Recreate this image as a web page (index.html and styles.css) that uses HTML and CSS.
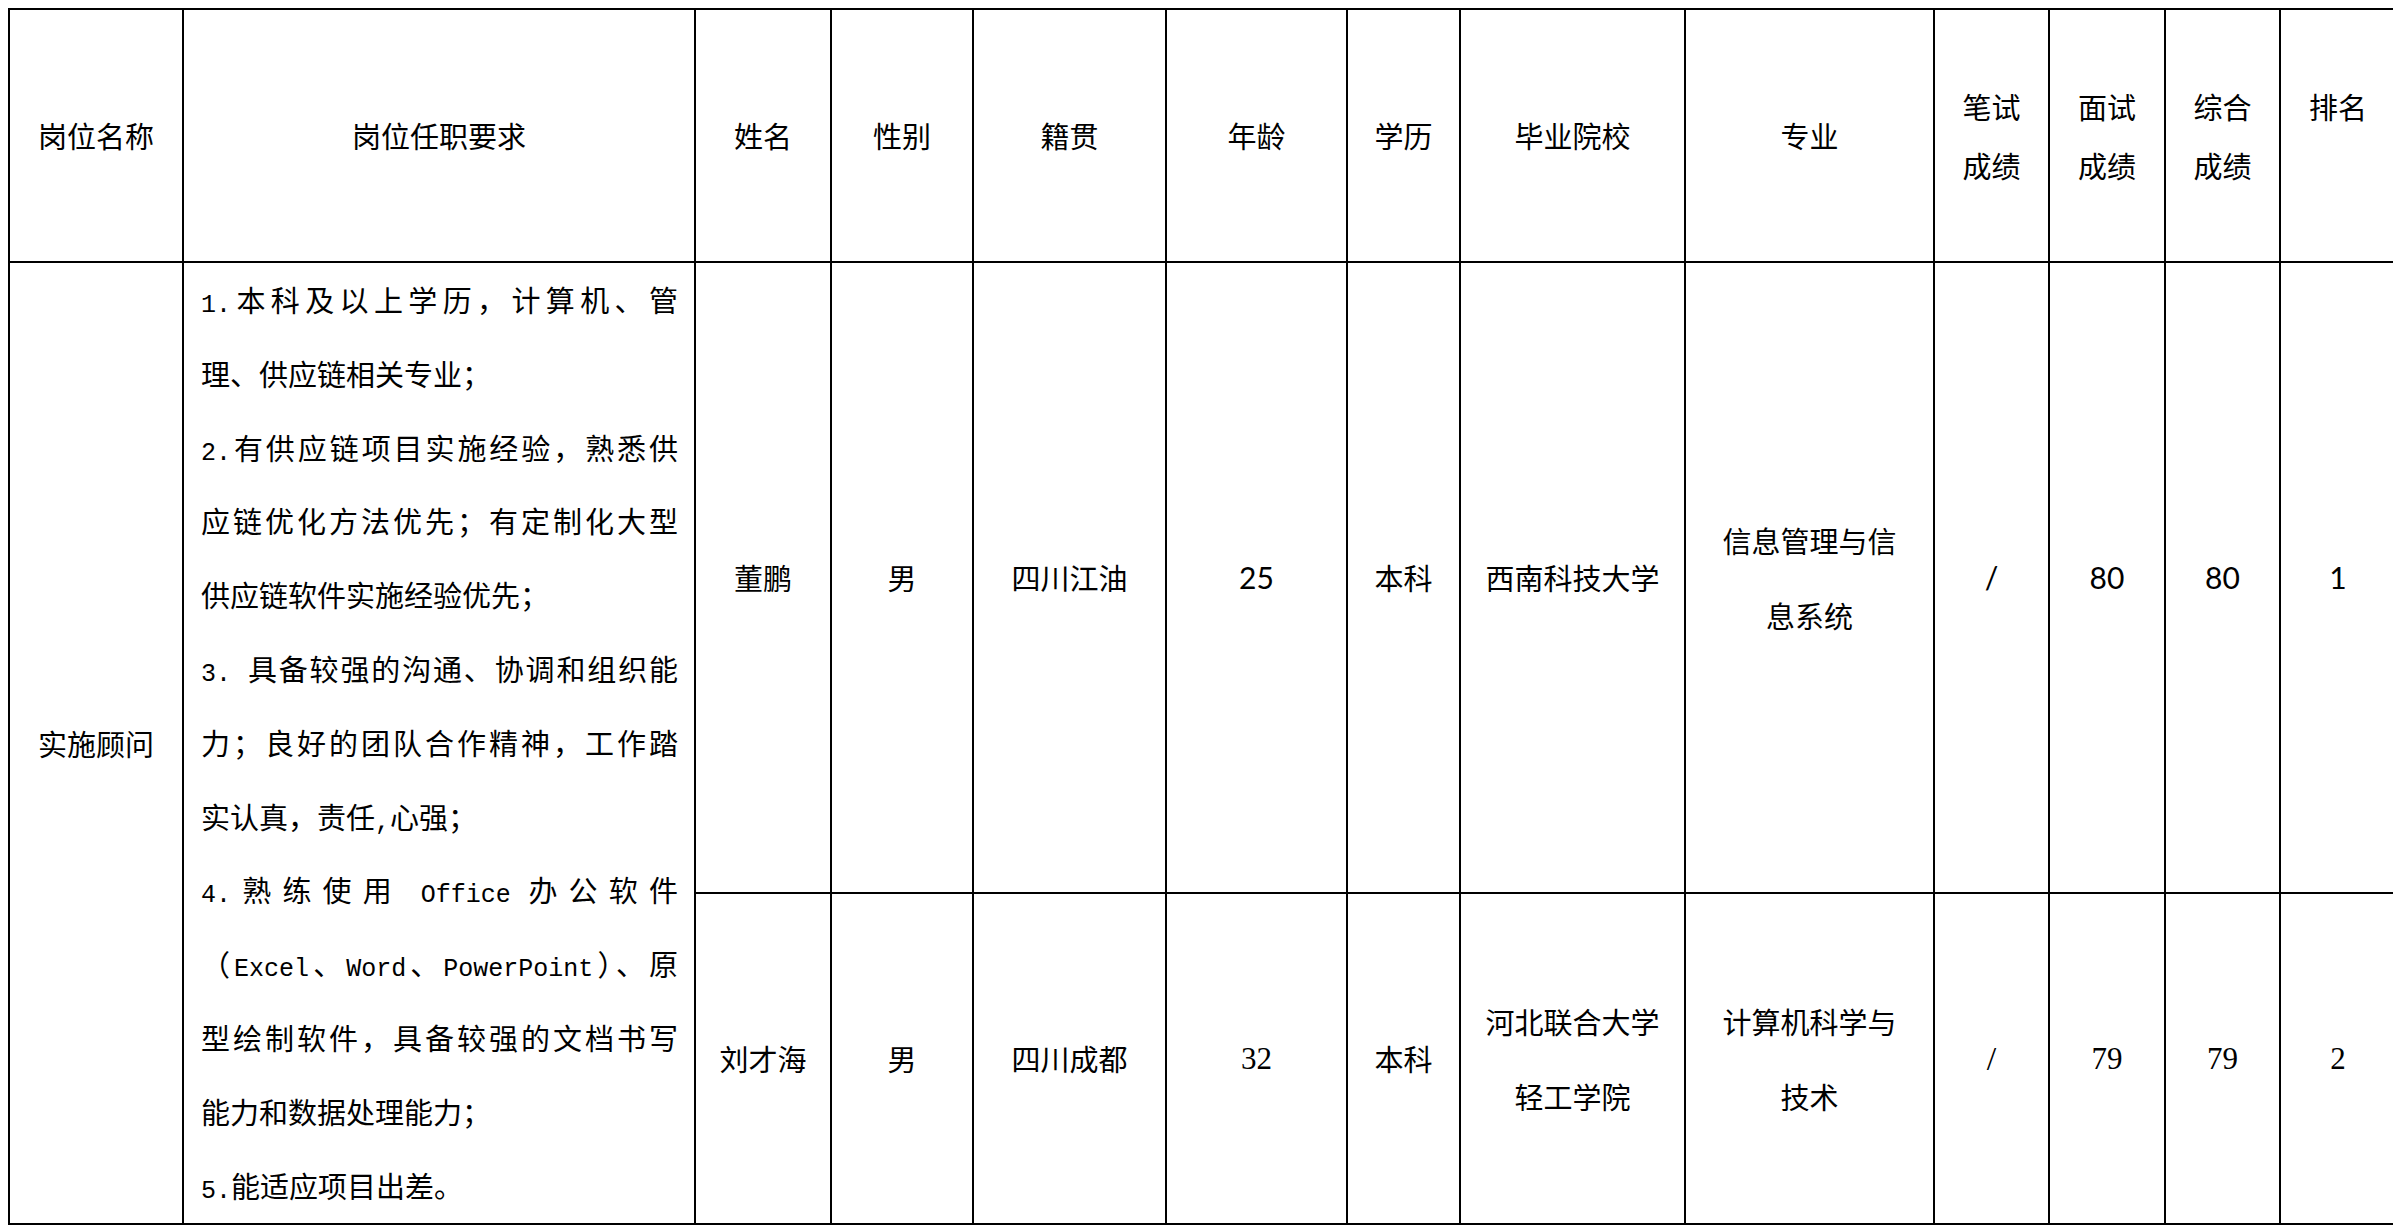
FILE: index.html
```html
<!DOCTYPE html>
<html lang="zh-CN">
<head>
<meta charset="utf-8">
<title>岗位面试成绩</title>
<link rel="stylesheet" href="styles.css">
</head>
<body>
<table class="sheet">
  <colgroup>
    <col class="c-pos"><col class="c-req"><col class="c-name"><col class="c-sex"><col class="c-home">
    <col class="c-age"><col class="c-edu"><col class="c-school"><col class="c-major">
    <col class="c-score"><col class="c-score2"><col class="c-score"><col class="c-rank">
  </colgroup>
  <thead>
    <tr class="hrow">
      <th>岗位名称</th>
      <th>岗位任职要求</th>
      <th>姓名</th>
      <th>性别</th>
      <th>籍贯</th>
      <th>年龄</th>
      <th>学历</th>
      <th>毕业院校</th>
      <th>专业</th>
      <th>笔试<br>成绩</th>
      <th>面试<br>成绩</th>
      <th>综合<br>成绩</th>
      <th class="top">排名</th>
    </tr>
  </thead>
  <tbody>
    <tr class="r1">
      <td rowspan="2" class="pos">实施顾问</td>
      <td rowspan="2" class="req">
        <p class="item">
          <span class="ln j"><span class="lat">1.</span>本科及以上学历，计算机、管</span>
          <span class="ln">理、供应链相关专业；</span>
        </p>
        <p class="item">
          <span class="ln j"><span class="lat">2.</span>有供应链项目实施经验，熟悉供</span>
          <span class="ln j">应链优化方法优先；有定制化大型</span>
          <span class="ln">供应链软件实施经验优先；</span>
        </p>
        <p class="item">
          <span class="ln j"><span class="lat">3. </span>具备较强的沟通、协调和组织能</span>
          <span class="ln j">力；良好的团队合作精神，工作踏</span>
          <span class="ln">实认真，责任<span class="lat">,</span>心强；</span>
        </p>
        <p class="item">
          <span class="ln j"><span class="lat">4.</span>熟练使用 <span class="lat">Office</span> 办公软件</span>
          <span class="ln j">（<span class="lat">Excel</span>、<span class="lat">Word</span>、<span class="lat">PowerPoint</span>）、原</span>
          <span class="ln j">型绘制软件，具备较强的文档书写</span>
          <span class="ln">能力和数据处理能力；</span>
        </p>
        <p class="item">
          <span class="ln"><span class="lat">5.</span>能适应项目出差。</span>
        </p>
      </td>
      <td>董鹏</td>
      <td>男</td>
      <td>四川江油</td>
      <td class="sans-num">25</td>
      <td>本科</td>
      <td>西南科技大学</td>
      <td>信息管理与信<br>息系统</td>
      <td class="sans-num">/</td>
      <td class="sans-num">80</td>
      <td class="sans-num">80</td>
      <td class="sans-num">1</td>
    </tr>
    <tr class="r2">
      <td>刘才海</td>
      <td>男</td>
      <td>四川成都</td>
      <td class="serif-num">32</td>
      <td>本科</td>
      <td>河北联合大学<br>轻工学院</td>
      <td>计算机科学与<br>技术</td>
      <td class="serif-num slash">/</td>
      <td class="serif-num">79</td>
      <td class="serif-num">79</td>
      <td class="serif-num">2</td>
    </tr>
  </tbody>
</table>
</body>
</html>
```

FILE: styles.css
```css
html, body {
  background: #ffffff;
}

body {
  margin: 8px;
}

.sheet {
  border-collapse: separate;
  border-spacing: 2px;
  background: #000000;
  table-layout: fixed;
  width: 2389px;
}

.c-pos { width: 172px; }
.c-req { width: 510px; }
.c-name { width: 134px; }
.c-sex { width: 140px; }
.c-home { width: 191px; }
.c-age { width: 179px; }
.c-edu { width: 111px; }
.c-school { width: 223px; }
.c-major { width: 247px; }
.c-score { width: 113px; }
.c-score2 { width: 114px; }
.c-rank { width: 114px; }

th, td {
  background: #ffffff;
  padding: 0;
  text-align: center;
  vertical-align: middle;
  color: #000000;
  font-family: "Noto Sans CJK SC", "Noto Sans CJK TC", sans-serif;
  font-size: 29px;
  font-weight: 400;
}

.hrow {
  height: 251px;
}

.hrow th {
  line-height: 59px;
}

.hrow th.top {
  vertical-align: top;
  padding-top: 67px;
}

.r1 {
  height: 629px;
}

.r2 {
  height: 329px;
}

tbody td {
  line-height: 75px;
}

.req {
  vertical-align: top;
  text-align: left;
  padding: 0 16px 0 17px;
  line-height: 73.8px;
}

.item {
  margin: 0;
}

.ln {
  display: block;
  white-space: nowrap;
}

.ln.j {
  text-align: justify;
  text-align-last: justify;
  white-space: normal;
}

.lat {
  font-family: "Liberation Mono", monospace;
  font-size: 25px;
  line-height: 1;
}

.sans-num {
  font-family: Lato, "Open Sans", sans-serif;
  font-size: 30px;
  font-weight: 400;
}

.serif-num {
  font-family: "Liberation Serif", serif;
  font-size: 31px;
}

.slash {
  font-size: 34px;
}
```
